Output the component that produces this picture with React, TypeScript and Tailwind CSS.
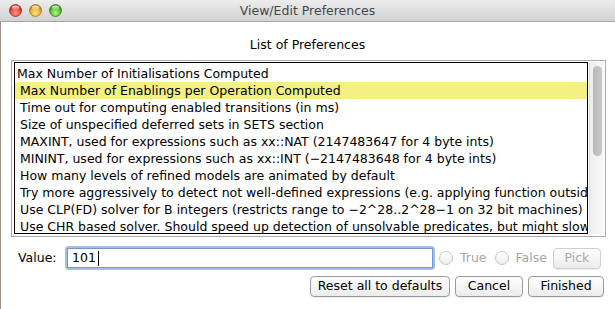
import React from "react";

function Light({ c1, c2, c3, id }: { c1: string; c2: string; c3: string; id: string }) {
  return (
    <svg width="13" height="13" viewBox="0 0 13 13">
      <defs>
        <radialGradient id={id} cx="50%" cy="70%" r="60%">
          <stop offset="0%" stopColor={c1} />
          <stop offset="70%" stopColor={c2} />
          <stop offset="100%" stopColor={c3} />
        </radialGradient>
        <linearGradient id={id + "h"} x1="0" y1="0" x2="0" y2="1">
          <stop offset="0%" stopColor="#ffffff" stopOpacity="0.9" />
          <stop offset="100%" stopColor="#ffffff" stopOpacity="0" />
        </linearGradient>
      </defs>
      <circle cx="6.5" cy="6.5" r="6" fill={`url(#${id})`} stroke={c3} strokeWidth="0.8" />
      <ellipse cx="6.5" cy="3.8" rx="3.8" ry="2.4" fill={`url(#${id}h)`} />
    </svg>
  );
}

const rows = [
  "Max Number of Initialisations Computed",
  "Max Number of Enablings per Operation Computed",
  "Time out for computing enabled transitions (in ms)",
  "Size of unspecified deferred sets in SETS section",
  "MAXINT, used for expressions such as xx::NAT (2147483647 for 4 byte ints)",
  "MININT, used for expressions such as xx::INT (\u22122147483648 for 4 byte ints)",
  "How many levels of refined models are animated by default",
  "Try more aggressively to detect not well-defined expressions (e.g. applying function outside domain)",
  "Use CLP(FD) solver for B integers (restricts range to \u22122^28..2^28\u22121 on 32 bit machines)",
  "Use CHR based solver. Should speed up detection of unsolvable predicates, but might slow down",
];

function Btn({ w, children, disabled }: { w: string; children: React.ReactNode; disabled?: boolean }) {
  return (
    <div
      className={
        "h-[21px] rounded-[4px] border flex items-center justify-center bg-linear-to-b from-white to-[#ececec] shadow-[0_1px_0_rgba(0,0,0,0.06)] " +
        w +
        (disabled ? " border-[#cfcfcf] text-[#a9a9a9]" : " border-[#9a9a9a] text-black")
      }
    >
      {children}
    </div>
  );
}

export default function App() {
  return (
    <div className="w-[615px] h-[309px] overflow-hidden bg-white flex flex-col text-black font-['DejaVu_Sans',sans-serif] text-[12.5px]">
      <div className="h-[22px] shrink-0 grid grid-cols-[1fr_auto_1fr] items-center bg-linear-to-b from-[#ededed] to-[#d2d2d2] border-b border-[#a6a6a6]">
        <div className="flex items-center gap-[7px] pl-[9px]">
          <Light id="r" c1="#ff9a8f" c2="#e5473c" c3="#a8251c" />
          <Light id="y" c1="#ffe38a" c2="#e8ae2a" c3="#a97414" />
          <Light id="g" c1="#b9f28a" c2="#5cbf2e" c3="#2f7f14" />
        </div>
        <div className="text-[#474747] leading-[16px]">View/Edit Preferences</div>
        <div />
      </div>
      <div className="flex-1 flex flex-col border-l border-[#9b938b]">
        <div className="pt-[15px] leading-[16px] text-center pr-[1px]">List of Preferences</div>
        <div className="mt-[7px] ml-[10px] w-[595px] h-[177px] border border-[#ababab] flex pt-[1px] pl-[2px] pr-[1px] pb-[2px]">
          <div className="w-[574px] h-[172px] border border-black overflow-hidden pt-[2px]">
            {rows.map((r, i) => (
              <div
                key={i}
                className={
                  "h-[17px] leading-[17px] whitespace-nowrap " +
                  (i === 0 ? "pl-[2px]" : "pl-[5px]") +
                  (i === 1 ? " bg-[#f3f184]" : "")
                }
              >
                {r}
              </div>
            ))}
          </div>
          <div className="ml-[1px] w-[15px] h-[172px] bg-linear-to-r from-[#eeeeee] to-[#f8f8f8] border-l border-[#e2e2e2] pl-[3px] pt-[4px]">
            <div className="w-[9px] h-[90px] rounded-full bg-linear-to-r from-[#b9b9b9] to-[#c9c9c9]" />
          </div>
        </div>
        <div className="mt-[9px] h-[24px] flex items-center">
          <div className="w-[64px] pl-[17px] leading-[16px]">Value:</div>
          <div className="w-[370px] h-[24px] rounded-[4px] bg-[#a3bfe9] p-[2px]">
            <div className="h-full border border-[#7397d0] bg-white flex items-center pl-[4px] leading-[16px]">
              <span>101</span>
              <span className="ml-[2px] w-[1px] h-[15px] bg-black" />
            </div>
          </div>
          <div className="ml-[4px] w-[14px] h-[14px] rounded-full border border-[#c8c8c8] bg-linear-to-b from-white to-[#efefef]" />
          <div className="ml-[7px] text-[#a6a6a6] leading-[16px]">True</div>
          <div className="ml-[8px] w-[14px] h-[14px] rounded-full border border-[#c8c8c8] bg-linear-to-b from-white to-[#efefef]" />
          <div className="ml-[7px] text-[#a6a6a6] leading-[16px]">False</div>
          <div className="ml-[6px]">
            <Btn w="w-[48px]" disabled>
              Pick
            </Btn>
          </div>
        </div>
        <div className="mt-[6px] flex justify-end gap-[5px] pr-[11px]">
          <Btn w="w-[140px]">Reset all to defaults</Btn>
          <Btn w="w-[68px]">Cancel</Btn>
          <Btn w="w-[76px]">Finished</Btn>
        </div>
      </div>
    </div>
  );
}
